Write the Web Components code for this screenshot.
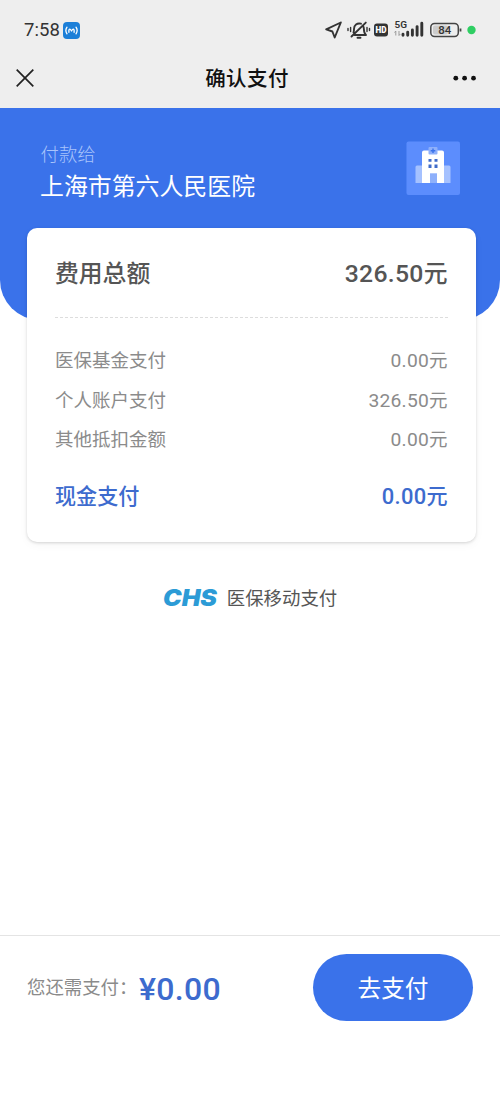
<!DOCTYPE html>
<html lang="zh-CN">
<head>
<meta charset="utf-8">
<title>确认支付</title>
<style>
html,body{margin:0;background:#fff}
body{font-family:Roboto,"Noto Sans CJK SC",sans-serif;color:#555}
</style>
</head>
<body>
<pay-page></pay-page>
<script>
const define = (name, css, html) => customElements.define(name, class extends HTMLElement {
  constructor() {
    super();
    const t = document.createElement('template');
    t.innerHTML = `<style>*{box-sizing:border-box}svg{display:block}${css}</style>${html}`;
    this.attachShadow({mode: 'open'}).append(t.content.cloneNode(true));
  }
});

define('status-bar', `
:host{display:flex;height:60px;padding:0 24px;align-items:center;justify-content:space-between;color:#333}
.l{display:flex;align-items:center;gap:4px}
.t{font:400 18.5px/24px Roboto,sans-serif;letter-spacing:.1px;width:35px;white-space:nowrap}
`, `
<div class="l"><span class="t">7:58</span>
<svg width="17" height="17" viewBox="0 0 17 17"><rect width="17" height="17" rx="4" fill="#1c7fd8"/><g fill="none" stroke="#fff" stroke-width="1.300" stroke-linecap="round" stroke-linejoin="round"><path d="M4 5.200Q1.700 8.500 4 11.800M13 5.200Q15.300 8.500 13 11.800"/><path d="M5.900 10.300V8Q7 6 8.500 9Q10 6 11.100 8V10.300"/></g></svg></div>
<svg width="152" height="24" viewBox="0 0 152 24" style="margin-right:-1px">
<g fill="none" stroke="#333" stroke-width="1.900" stroke-linejoin="round" stroke-linecap="round">
<path d="M15.800 4.500 1.200 11.300 7.400 13.500 9.700 19.500Z"/>
<path d="M29.500 17h11.500c-2.100-1.600-2.100-3-2.100-6 0-1.200-.3-2.200-.8-3M36 5.700c-4-1-7 1.300-7 5.300 0 1.500 0 2.500-.5 3.500M32.500 19.800h3M40.800 4.600 26.500 18.500"/>
<path d="M25.600 9.500v4M23 10.500v2M42 9.500v4M44.500 10.500v2" stroke-width="1.400"/></g>
<rect x="49" y="5.500" width="14" height="13" rx="3" fill="#333"/>
<text x="50.500" y="15" font-family="Roboto" font-size="8.500" font-weight="900" fill="#fff" textLength="11" lengthAdjust="spacingAndGlyphs">HD</text>
<text x="69.500" y="9.500" font-family="Roboto" font-size="9.500" font-weight="600" fill="#333" textLength="12.500" lengthAdjust="spacingAndGlyphs">5G</text>
<path d="M70.800 17.500v-4.500l-1.300 1.500M74 13v4.500l1.300-1.500" fill="none" stroke="#999"/>
<path d="M78 16.300v1M82.700 14.300v3M87.400 12v5.300M92.100 8.600v8.700M96.800 5.200v12.100" stroke="#333" stroke-width="2.900" stroke-linecap="round"/>
<rect x="108" y="7.500" width="15" height="9" rx="2" fill="#ccc"/>
<rect x="105.800" y="5.500" width="27.500" height="13" rx="3.800" fill="none" stroke="#444" stroke-width="1.500"/>
<path d="M135.500 10.500v3" stroke="#444" stroke-width="1.800"/>
<text x="113.300" y="16" font-family="Roboto" font-size="11.500" font-weight="500" fill="#333" textLength="13" lengthAdjust="spacingAndGlyphs">84</text>
<circle cx="146.500" cy="12" r="4.200" fill="#2fce63"/>
</svg>`);

define('nav-bar', `
:host{display:grid;grid-template-columns:1fr auto 1fr;height:48px;padding:0 24px 0 16px;align-items:center;color:#111}
.t{font:500 20.500px/28px "Noto Sans CJK SC",sans-serif;margin-top:-14px;letter-spacing:.4px;padding-left:2px}
.x{margin-top:-12px}.d{justify-self:end;margin-top:-12px}
`, `
<svg class="x" width="18" height="18" viewBox="0 0 18 18"><path d="M.7.700 17.300 17.300M17.300.7.700 17.300" stroke="#222" stroke-width="1.700"/></svg>
<span class="t"><slot></slot></span>
<svg class="d" width="23" height="6" viewBox="0 0 23 6" fill="#111"><circle cx="2.800" cy="3.200" r="2.400"/><circle cx="11.600" cy="3.200" r="2.400"/><circle cx="20.500" cy="3.200" r="2.400"/></svg>`);

define('payee-hero', `
:host{display:flex;justify-content:space-between;height:212px;padding:33px 40px 0;background:#3a72ea;border-radius:0 0 40px 40px}
.a{font-size:18.400px;line-height:27px;color:#a9c4fb;font-weight:300;padding-left:.5px}
.b{font-size:23.900px;line-height:39px;color:#fff;font-weight:400}
`, `
<div><div class="a">付款给</div><div class="b"><slot></slot></div></div>
<svg width="54" height="54" viewBox="0 0 54 54"><rect x=".5" y=".5" width="53.500" height="53.500" rx="2" fill="#5c8dfd"/><path d="M9.500 26a1.500 1.500 0 0 1 1.500-1.500h32a1.500 1.500 0 0 1 1.500 1.500v16h-35z" fill="#a5c1ff"/><path d="M16 11.500a2 2 0 0 1 2-2h18a2 2 0 0 1 2 2V42h-7v-9.500h-7V42h-8z" fill="#fff"/><rect x="22.500" y="6" width="9" height="7.500" rx="1" fill="#8eb0fb"/><path d="M27 7.500v4.500M24.700 9.700h4.600" stroke="#3a72ea" stroke-width="1.400"/><path d="M24 32.500h7V42h-7z" fill="#8eb0fb"/><path d="M22.500 18h3v2.800h-3zM28.500 18h3v2.800h-3zM22.500 23.500h3V27h-3zM28.500 23.500h3V27h-3z" fill="#3f6bca"/></svg>`);

define('fee-row', `
:host{display:flex;justify-content:space-between;align-items:center;height:39.400px;font-size:18.500px;line-height:30px;color:#8b8b8b;white-space:nowrap}
:host([kind=total]){height:90px;font-size:23.800px;color:#555;font-weight:500;border-bottom:1px dashed #ddd;margin-bottom:23.500px;padding-top:2px}
:host([kind=cash]){height:40px;font-size:21.100px;color:#3d6bce;font-weight:500;margin-top:17.500px}
.n{font-size:1.040em;letter-spacing:.012em}
`, `<slot name="label"></slot><span><span class="n"><slot></slot></span>元</span>`);

define('fee-card', `
:host{display:block;margin:-92px 24.500px 0 27px;height:314px;padding:0 28px;background:#fff;border-radius:10px;box-shadow:0 1px 3px rgba(0,0,0,.15),0 3px 10px rgba(0,0,0,.04)}
`, `<slot></slot>`);

define('chs-brand', `
:host{display:flex;align-items:center;justify-content:center;gap:7px;margin-top:42px;padding-right:1px;height:28px;font-size:18.400px;line-height:28px;color:#555}
span{padding-top:1px}
`, `<svg width="58" height="28" viewBox="-1 -5 58 28"><text x="0" y="17" font-family="Inter" font-style="italic" font-weight="900" font-size="22.500" fill="#2c9bd6" textLength="54" lengthAdjust="spacingAndGlyphs">CHS</text></svg><span><slot></slot></span>`);

define('pay-footer', `
:host{display:flex;height:165px;margin-top:auto;border-top:1.500px solid #e4e4e4;padding:18px 27px 0;align-items:flex-start}
.l{font-size:18.400px;line-height:68px;color:#8b8b8b;width:112px;white-space:nowrap}
.p{font-size:32px;line-height:70px;color:#3d6bce;font-weight:500;flex:1;letter-spacing:.3px}
button{width:160px;height:67px;border:0;border-radius:34px;background:#3a72ea;color:#fff;font:400 23.700px/66px "Noto Sans CJK SC",sans-serif;padding:0 0 1px}
`, `<span class="l">您还需支付：</span><span class="p"><slot></slot></span><button>去支付</button>`);

define('pay-page', `
:host{display:flex;flex-direction:column;width:500px;height:1100px;overflow:hidden}
.top{background:#eee}
`, `
<div class="top"><status-bar></status-bar><nav-bar>确认支付</nav-bar></div>
<payee-hero>上海市第六人民医院</payee-hero>
<fee-card>
<fee-row kind="total"><span slot="label">费用总额</span>326.50</fee-row>
<fee-row><span slot="label">医保基金支付</span>0.00</fee-row>
<fee-row><span slot="label">个人账户支付</span>326.50</fee-row>
<fee-row><span slot="label">其他抵扣金额</span>0.00</fee-row>
<fee-row kind="cash"><span slot="label">现金支付</span>0.00</fee-row>
</fee-card>
<chs-brand>医保移动支付</chs-brand>
<pay-footer>¥0.00</pay-footer>`);
</script>
</body>
</html>
